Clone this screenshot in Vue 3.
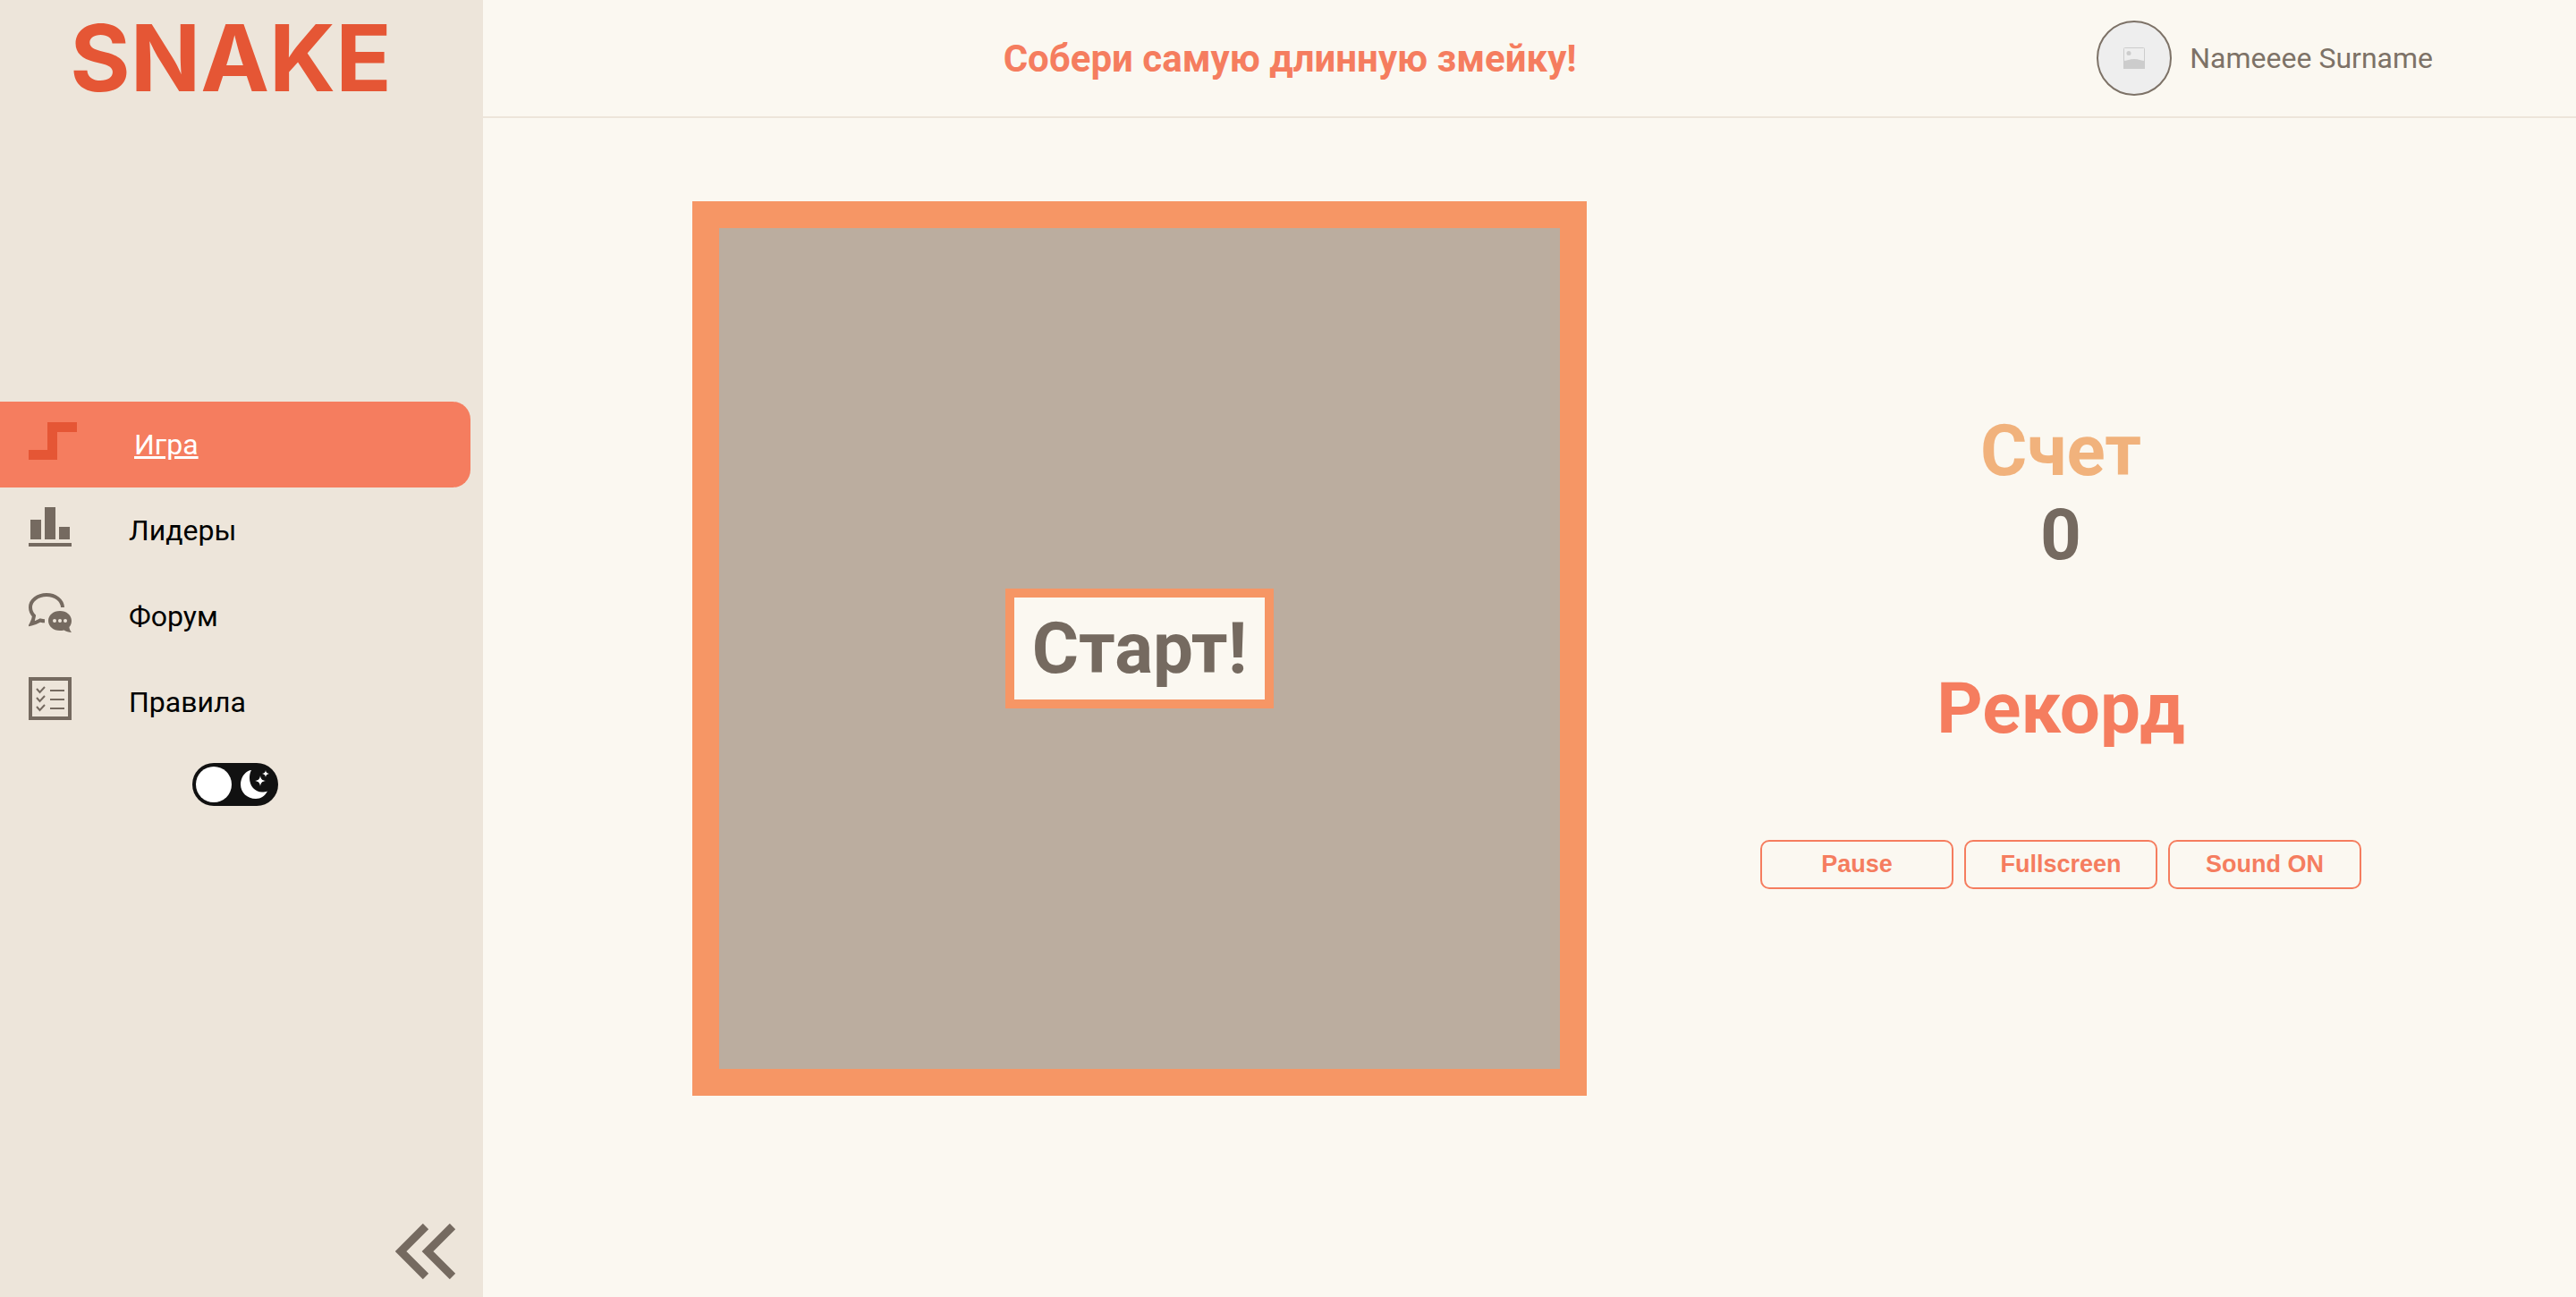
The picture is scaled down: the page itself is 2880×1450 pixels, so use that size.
<script setup>
import { ref } from 'vue'

const score = ref(0)
const dark = ref(false)
</script>

<template>
  <div class="page">
    <aside class="sidebar">
      <div class="logo">SNAKE</div>

      <nav class="nav">
        <a class="nav-item active" href="#game">
          <svg class="icon" width="54" height="42" viewBox="0 0 54 42" fill="#e55635" aria-hidden="true">
            <path d="M0 31h21V0h33v11H32v31H0z" />
          </svg>
          <span>Игра</span>
        </a>
        <a class="nav-item" href="#leaders">
          <svg class="icon" width="48" height="44" viewBox="0 0 48 44" fill="#756a60" aria-hidden="true">
            <path d="M2 14h12v22H2zM18 0h12v36H18zM34 22h12v14H34zM0 40h48v4H0z" />
          </svg>
          <span>Лидеры</span>
        </a>
        <a class="nav-item" href="#forum">
          <svg class="icon" width="48" height="44" viewBox="0 0 48 44" aria-hidden="true">
            <path d="M38 16C37.500 8 30 2 20 2S2 8.500 2 16c0 4.500 1.500 7 4 9.500-.3 3-1 5.500-3 9 3.500-.8 6.500-2 10-4 2 .5 3.500 .8 5 .8" fill="none" stroke="#756a60" stroke-width="4" />
            <path d="M35 20c7.500 0 13 4.800 13 11 0 3.200-1.100 5.300-2.600 7 .2 2.200 1 4 2.600 6-3.300-.4-6-1.200-8.600-2.600-1.400.4-2.900.6-4.400.6-7.500 0-13-4.900-13-11s5.500-11 13-11z" fill="#756a60" />
            <g fill="#ede5da">
              <circle cx="29" cy="31" r="2" />
              <circle cx="35" cy="31" r="2" />
              <circle cx="41" cy="31" r="2" />
            </g>
          </svg>
          <span>Форум</span>
        </a>
        <a class="nav-item" href="#rules">
          <svg class="icon" width="48" height="48" viewBox="0 0 48 48" fill="none" stroke="#756a60" aria-hidden="true">
            <path d="M2 2h44v44H2z" stroke-width="4" />
            <path d="M24 15h16M24 25h16M24 35h16M9 13l3.500 4L18 11M9 23l3.500 4L18 21M9 33l3.500 4L18 31" stroke-width="2" />
          </svg>
          <span>Правила</span>
        </a>
        <label class="switch">
          <input v-model="dark" type="checkbox" aria-label="Тёмная тема" />
          <svg width="32" height="32" viewBox="0 0 32 32" fill="#fff" aria-hidden="true">
            <path d="M12 0C10.500 2.500 10 5.500 10 9c0 8.500 6 15.500 14 15.500 2.300 0 4.200-.3 6-1C27.500 28.700 22.500 32 17 32 7.500 32 0 25 0 16 0 8.500 4.500 2.500 10 .3 11 0 11.500-.2 12 0z" />
            <path d="M22 6c.6 4 2 5.400 6 6-4 .6-5.400 2-6 6-.6-4-2-5.400-6-6 4-.6 5.400-2 6-6z" />
            <path d="M28 0c.4 2.700 1.300 3.600 4 4-2.700.4-3.600 1.300-4 4-.4-2.700-1.300-3.600-4-4 2.700-.4 3.600-1.300 4-4z" />
          </svg>
        </label>
      </nav>

      <button class="collapse" type="button" aria-label="Свернуть меню">
        <svg width="68" height="62" viewBox="0 0 68 62" fill="none" stroke="#756a60" stroke-width="9" aria-hidden="true">
          <path d="M34 3L6 31l28 28M64 3L36 31l28 28" />
        </svg>
      </button>
    </aside>

    <div class="content">
      <header class="header">
        <h1 class="title">Собери самую длинную змейку!</h1>
        <a class="user" href="#profile">
          <span class="avatar">
            <svg width="24" height="24" viewBox="0 0 24 24" aria-hidden="true">
              <rect x="0.500" y="0.500" width="23" height="23" rx="1" fill="none" stroke="#ccc" />
              <circle cx="6" cy="6.500" r="2.500" fill="#ccc" />
              <path d="M0 15c4 0 7-2 12-2s8 2 12 2v9H0z" fill="#ccc" />
            </svg>
          </span>
          <span>Nameeee Surname</span>
        </a>
      </header>

      <main class="main">
        <section class="board">
          <button class="start" type="button">Старт!</button>
        </section>

        <section class="panel">
          <div class="stat">
            <div class="score-label">Счет</div>
            <div>{{ score }}</div>
          </div>
          <div class="stat record-label">Рекорд</div>
          <div class="controls">
            <button type="button">Pause</button>
            <button type="button">Fullscreen</button>
            <button type="button">Sound ON</button>
          </div>
        </section>
      </main>
    </div>
  </div>
</template>

<style>
body {
  margin: 0;
}
</style>

<style scoped>
.page {
  display: flex;
  min-height: 100vh;
  background: #fbf8f1;
  font-family: Roboto, "Liberation Sans", sans-serif;
  font-size: 32px;
  color: #756a60;
}

button {
  margin: 0;
  cursor: pointer;
}

.sidebar {
  box-sizing: border-box;
  display: flex;
  flex-direction: column;
  flex: 0 0 540px;
  padding-right: 14px;
  background: #ede5da;
}

.logo {
  height: 130px;
  padding-right: 10px;
  font: 700 103px/130px Inter, sans-serif;
  text-align: center;
  color: #e55635;
}

.nav {
  display: flex;
  flex-direction: column;
  margin-top: 22vh;
}

.nav-item {
  display: flex;
  align-items: center;
  gap: 64px;
  height: 96px;
  padding-left: 32px;
  color: #000;
  text-decoration: none;
}

.nav-item.active {
  border-radius: 0 20px 20px 0;
  background: #f57d5f;
  color: #fff;
  text-decoration: underline;
}

.icon {
  flex: none;
  margin-bottom: 8px;
}

.switch {
  box-sizing: border-box;
  display: flex;
  align-items: center;
  justify-content: space-between;
  align-self: center;
  width: 96px;
  height: 48px;
  margin-top: 20px;
  padding: 0 10px 0 4px;
  border-radius: 24px;
  background: #111;
  cursor: pointer;
}

.switch input {
  appearance: none;
  width: 40px;
  height: 40px;
  margin: 0;
  border-radius: 50%;
  background: #fff;
}

.collapse {
  display: flex;
  align-self: flex-end;
  margin: auto 16px 20px 0;
  padding: 0;
  border: 0;
  background: none;
}

.content {
  display: flex;
  flex-direction: column;
  flex: 1;
}

.header {
  box-sizing: border-box;
  display: flex;
  align-items: center;
  height: 132px;
  padding-right: 160px;
  border-bottom: 2px solid #ede5da;
}

.title {
  margin: 0 0 0 auto;
  font-size: 42px;
  font-weight: 700;
  color: #f57d5f;
}

.user {
  display: flex;
  align-items: center;
  gap: 20px;
  margin-left: auto;
  color: #7d7267;
  text-decoration: none;
}

.avatar {
  box-sizing: border-box;
  display: flex;
  align-items: center;
  justify-content: center;
  width: 84px;
  height: 84px;
  border: 2px solid #7d7267;
  border-radius: 50%;
  background: #eee;
}

.main {
  display: flex;
  justify-content: space-between;
  align-items: center;
  flex: 1;
  padding: 0 10% 132px;
}

.board {
  box-sizing: border-box;
  display: flex;
  align-items: center;
  justify-content: center;
  width: 1000px;
  height: 1000px;
  border: 30px solid #f69665;
  background: #bbad9f;
}

.start {
  padding: 10px 20px;
  border: 10px solid #f69665;
  background: #fbf8f1;
  font: 700 80px/94px Roboto, sans-serif;
  color: #756a60;
}

.panel {
  display: flex;
  flex-direction: column;
  align-items: center;
  gap: 100px;
}

.stat {
  font-size: 80px;
  font-weight: 700;
  line-height: 94px;
  text-align: center;
}

.score-label {
  color: #f1b27c;
}

.record-label {
  color: #f57d5f;
}

.controls {
  display: flex;
  gap: 12px;
  padding: 0 6px;
}

.controls button {
  width: 216px;
  height: 55px;
  padding: 0;
  border: 2px solid #f57d5f;
  border-radius: 10px;
  background: none;
  font: 700 27px "Liberation Sans", Arial, sans-serif;
  color: #f57d5f;
}
</style>
